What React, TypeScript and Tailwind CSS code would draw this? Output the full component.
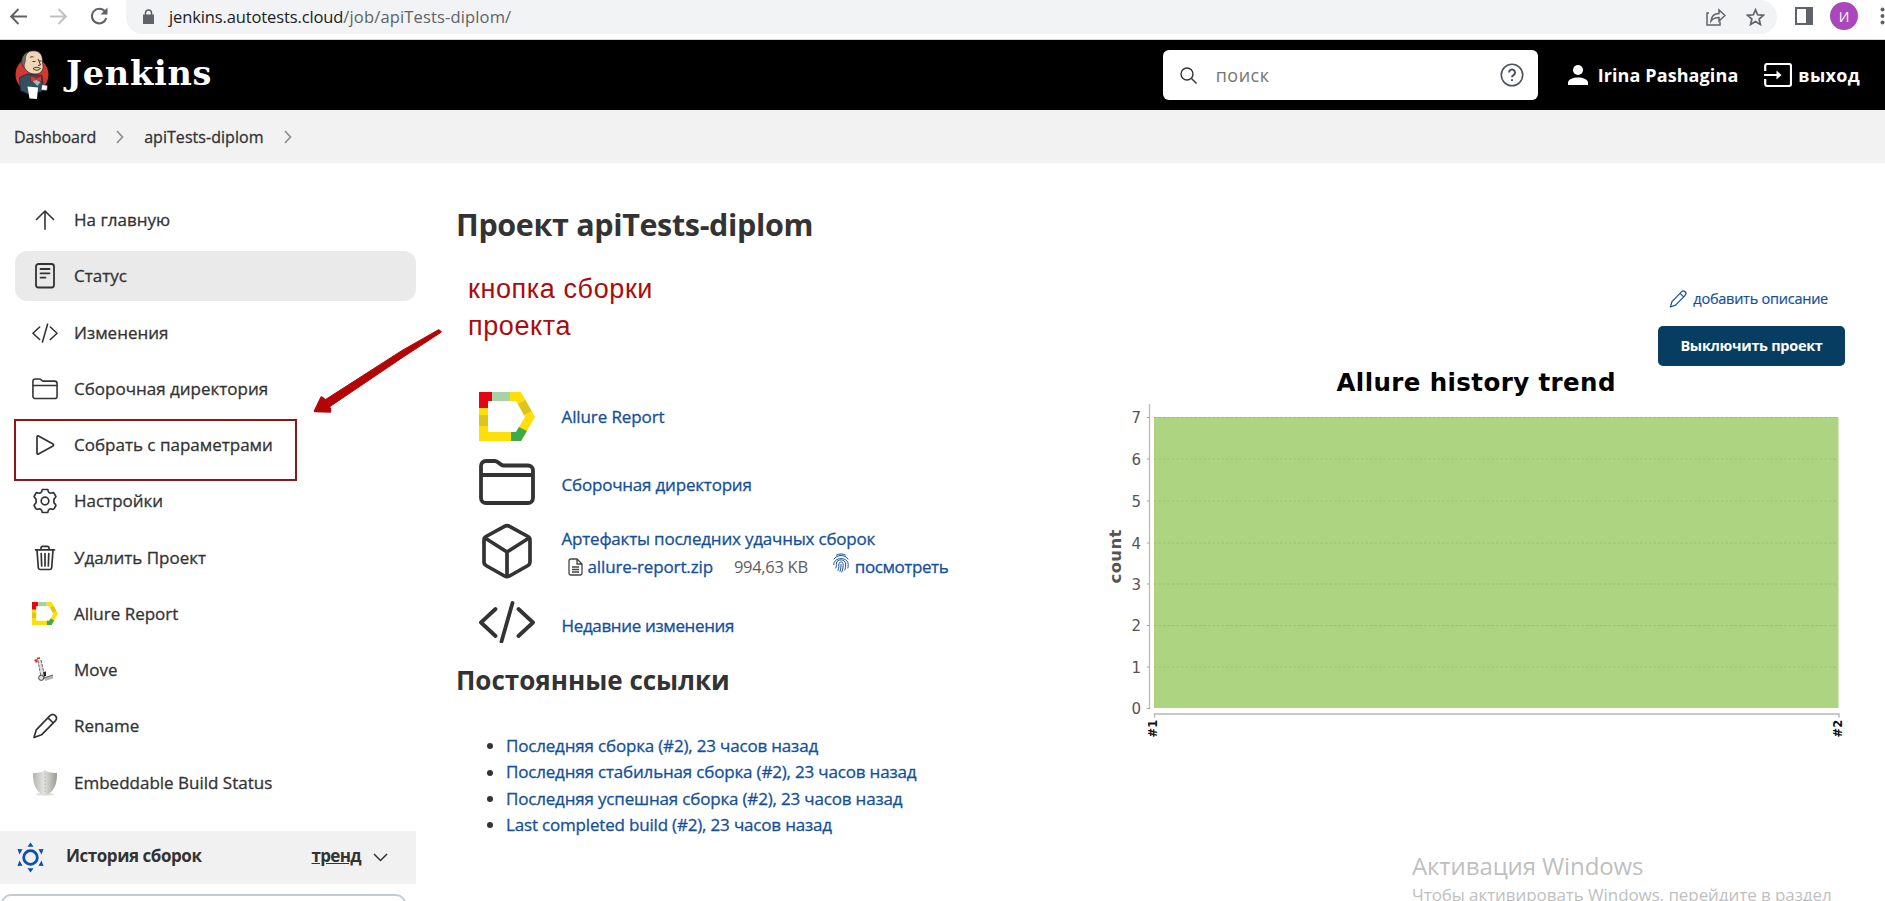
import React from "react";

const ink = "#333333";

function ArrowUp() {
  return (
    <svg width="26" height="26" viewBox="0 0 26 26" fill="none" stroke={ink} strokeWidth="1.6" strokeLinecap="round" strokeLinejoin="round">
      <path d="M13 22.2V4M4.5 12.5 13 4l8.500 8.500" />
    </svg>
  );
}
function StatusIcon() {
  return (
    <svg width="26" height="26" viewBox="0 0 26 26" fill="none" stroke={ink} strokeWidth="1.800" strokeLinecap="round">
      <rect x="4" y="1" width="18" height="23.500" rx="2.500" />
      <path d="M8.500 6h9M8.500 10.300h9M8.500 14.600h5" />
    </svg>
  );
}
function CodeIcon({ w, h, s }: { w: number; h: number; s: number }) {
  return (
    <svg width={w} height={h} viewBox="0 0 56 42" fill="none" stroke={ink} strokeWidth={s} strokeLinecap="round" strokeLinejoin="round">
      <path d="M16.500 8 2 21.500 16.500 35M39.500 8 54 21.500 39.500 35M33.500 2 22.500 40.500" />
    </svg>
  );
}
function FolderIcon({ w, h, s }: { w: number; h: number; s: number }) {
  return (
    <svg width={w} height={h} viewBox="0 0 56 46" fill="none" stroke={ink} strokeWidth={s} strokeLinejoin="round">
      <path d="M2 7a5 5 0 0 1 5-5h9c3.500 0 5 4.500 8.500 4.500h24.500a5 5 0 0 1 5 5V39a5 5 0 0 1-5 5H7a5 5 0 0 1-5-5ZM2 16h52" />
    </svg>
  );
}
function PlayIcon() {
  return (
    <svg width="26" height="26" viewBox="0 0 26 26" fill="none" stroke={ink} strokeWidth="1.700" strokeLinejoin="round">
      <path d="M5 4.800v16.400c0 .8.8 1.200 1.500.8L21 13.900c.7-.4.7-1.400 0-1.800L6.500 4c-.7-.4-1.500 0-1.500.8Z" />
    </svg>
  );
}
function GearIcon() {
  return (
    <svg width="26" height="26" viewBox="0 0 26 26" fill="none" stroke={ink} strokeWidth="1.700" strokeLinejoin="round">
      <path d="M10.200 1.500h5.600q.2 2.600 1.500 3.300t3.500-.1q1 0 1.500 1l1.600 2.800q-.1 1.200-1.700 2.300-.7 2.200 0 4.400 1.600 1 1.700 2.300l-1.600 2.800q-.5 1-1.500 1-2.200-.8-3.500-.1t-1.500 3.300h-5.600q-.2-2.600-1.500-3.300t-3.500.1q-1 0-1.500-1l-1.600-2.800q.1-1.200 1.700-2.300.7-2.200 0-4.400-1.600-1-1.700-2.300l1.600-2.800q.5-1 1.500-1 2.200.8 3.500.1t1.500-3.300Z" />
      <circle cx="13" cy="13" r="3.800" />
    </svg>
  );
}
function TrashIcon() {
  return (
    <svg width="26" height="26" viewBox="0 0 26 26" fill="none" stroke={ink} strokeWidth="1.700" strokeLinecap="round" strokeLinejoin="round">
      <path d="M3.500 4.800h19M9 4.500V3c0-1 .6-1.700 1.700-1.700h4.600C16.400 1.300 17 2 17 3v1.500M5 5l1.300 17.500c.1 1.300 1 2 2.200 2h9c1.200 0 2.100-.7 2.200-2L21 5M9.200 8.500l.5 12.500M13 8.500V21M16.800 8.500 16.300 21" />
    </svg>
  );
}
function AllureIcon({ w, h }: { w: number; h: number }) {
  return (
    <svg width={w} height={h} viewBox="0 0 56 49" preserveAspectRatio="none">
      <path fill="#ffde0a" d="M31 0h11l14 25-14 24H0V15h9v25h28l9-15-9-16h-6Z" />
      <path fill="#e30613" d="M0 0h13v9H9v7H0Z" />
      <path fill="#a5d3a5" d="M13 0h18v9H13Z" />
      <path fill="#dfc41c" d="M0 23h9v11H0ZM46.500 8l6 11-7.500 4-6-11Z" />
      <path fill="#3dab49" d="M32 40h5l3-5 8 4-6 10H32Z" />
    </svg>
  );
}
function MoveIcon() {
  return (
    <svg width="26" height="26" viewBox="0 0 26 26" fill="none">
      <path d="M7.500 3 11 18" stroke="#ddd" strokeWidth="3" />
      <path d="M6 3.500 9 20M9 3l3.500 15" stroke="#555" strokeWidth=".9" strokeDasharray="3 1" />
      <path d="M2.500 3.500l3-.8M5 1.500l3-.6M3.500 5l2-.4" stroke="#c22" strokeWidth="1.500" />
      <path d="M12 20.500 21 17.500v4l-8 2.500Z" fill="#b5b5b5" />
      <path d="M12 21 21 18" stroke="#555" strokeWidth=".8" />
      <path d="m11.500 15 2.500-.5v4.500l-2.500 1Z" fill="#222" />
      <circle cx="9.200" cy="20.800" r="2.600" fill="#ddd" stroke="#444" />
    </svg>
  );
}
function PencilIcon({ size, color, s }: { size: number; color: string; s: number }) {
  return (
    <svg width={size} height={size} viewBox="0 0 26 26" fill="none" stroke={color} strokeWidth={s} strokeLinejoin="round">
      <path d="M2 24.500 4.300 16.800 18 2.700c3.500-3.500 8.700 1.500 5.300 5.100L9.500 21.800ZM16 4.800l5.300 5.200" />
    </svg>
  );
}
function ShieldIcon() {
  return (
    <svg width="26" height="26" viewBox="0 0 26 26">
      <defs>
        <linearGradient id="shield" x1="0" x2="1">
          <stop offset="0" stopColor="#b5b5b0" />
          <stop offset=".45" stopColor="#e2e2de" />
          <stop offset="1" stopColor="#9a9a95" />
        </linearGradient>
      </defs>
      <ellipse cx="13" cy="24.300" rx="9" ry="1.500" fill="#dcdcdc" />
      <path d="M13 0c3 2.500 7 3.200 12 3 .3 9-2 17-8 20.500L13 25.500l-4-2C3 20 .7 12 1 3c5 .2 9-.5 12-3Z" fill="url(#shield)" />
      <path d="M13 3v20" stroke="#b0b0b0" strokeWidth="1" strokeDasharray="1.500 2" />
    </svg>
  );
}
function Butler() {
  return (
    <svg width="36" height="50" viewBox="0 0 36 50">
      <ellipse cx="17" cy="24.500" rx="16.500" ry="17" fill="#d33833" />
      <path d="M4.500 27.500 12 24l15 1.500 1 8-1 8-14 2.500-7.500-3.500Z" fill="#335061" stroke="#1a2a35" strokeWidth=".8" />
      <path d="M8.500 13C8 5 12 .8 18.500 .8c7.500 0 9.500 6 9 12.200 2 6-1 11-7 11-7 .5-12-5-12-11Z" fill="#f0d6b7" stroke="#222" strokeWidth=".7" />
      <path d="M8.500 17C5 12 6.500 4 14 1.500c-2 2-3.500 4-3.500 7 0 2.500-.5 4.500-2 8.500Z" fill="#6d6b6d" stroke="#222" strokeWidth=".5" />
      <path d="M15 7.500c1.500-1 2.500-1 3.500-.5M17.500 11.500h3M24 11h2.500M23 9l2.500 6-2.500.5M18 18.500c3-2 5.500-1 7.500 0-2 2-5 2.500-7.500 0Z" fill="none" stroke="#33251d" strokeWidth=".9" />
      <path d="M15.500 25.500l6 2.500 5-2.500v6.500l-5-2-6 2Z" fill="#d33833" stroke="#611" strokeWidth=".5" />
      <path d="m17.500 31 4-1 4 2-3 4Z" fill="#a9b4bb" />
      <path d="M12.500 36.500 23 37.500l-1 11.500-7.500-.5Z" fill="#fff" />
      <path d="M27 34.500 32.500 35.500l-.5 5-6-.5Z" fill="#fff" stroke="#222" strokeWidth=".6" />
    </svg>
  );
}
function BuildHistoryIcon() {
  return (
    <svg width="27" height="31" viewBox="-13.500 -15.500 27 31" fill="#0b4fb3">
      <circle r="6.800" fill="none" stroke="#0b4fb3" strokeWidth="2.800" />
      <path d="M0-15 3-10.800h-6ZM0 15 3 10.800h-6ZM13-8.500l-5 .3L11-3ZM-13-8.500l5 .3L-11-3ZM13 8.500l-5-.3L11 3ZM-13 8.500l5-.3L-11 3Z" />
    </svg>
  );
}
function Fingerprint() {
  return (
    <svg width="16" height="20" viewBox="0 0 16 20" fill="none" stroke="#144f9e" strokeWidth="1" strokeLinecap="round">
      <path d="M3.500 2C6 .6 10 .6 12.500 2M1 6c3-4.700 11-4.700 14 0M.8 11.500C.8 3.500 15.200 3.500 15.200 11.500c0 1.500 0 2.500-.3 3.500M2.800 15c1-2 .4-3 .6-5 .6-4.300 9-4.300 9.300 1 0 2.500-.2 4.500-.8 6M5 17.500c1.300-3 .6-5 .9-7 .5-2 3.900-2 4.200 0 .2 3-.2 5.500-1.200 8.500M8 11.500c.1 2.500-.2 4.500-1 7" />
    </svg>
  );
}

const menu: { icon: React.ReactNode; label: string; active?: boolean }[] = [
  { icon: <ArrowUp />, label: "На главную" },
  { icon: <StatusIcon />, label: "Статус", active: true },
  { icon: <CodeIcon w={26} h={20} s={3.4} />, label: "Изменения" },
  { icon: <FolderIcon w={26} h={21.5} s={3.4} />, label: "Сборочная директория" },
  { icon: <PlayIcon />, label: "Собрать с параметрами" },
  { icon: <GearIcon />, label: "Настройки" },
  { icon: <TrashIcon />, label: "Удалить Проект" },
  { icon: <AllureIcon w={26} h={23} />, label: "Allure Report" },
  { icon: <MoveIcon />, label: "Move" },
  { icon: <PencilIcon size={26} color={ink} s={1.7} />, label: "Rename" },
  { icon: <ShieldIcon />, label: "Embeddable Build Status" },
];

const permalinks = [
  "Последняя сборка (#2), 23 часов назад",
  "Последняя стабильная сборка (#2), 23 часов назад",
  "Последняя успешная сборка (#2), 23 часов назад",
  "Last completed build (#2), 23 часов назад",
];

function Chevron() {
  return (
    <svg width="8" height="14" viewBox="0 0 8 14" fill="none" stroke="#8a8a8a" strokeWidth="1.600">
      <path d="m1 1 5.500 6L1 13" />
    </svg>
  );
}

function TrendChart() {
  const ticks = [417.5, 459, 501, 543, 584, 625.5, 667, 708.5];
  return (
    <svg className="shrink-0" width="740" height="382" viewBox="1105 366 740 382" fontFamily="DejaVu Sans, sans-serif">
      <text x="1336.500" y="390.500" fontSize="24.500" fontWeight="700" fill="#000" textLength="279">Allure history trend</text>
      <rect x="1154" y="417" width="684.500" height="291" fill="#add581" />
      <path d="M1149.500 404v305" stroke="#bdbab6" strokeWidth="1.300" />
      {ticks.map((y, i) => (
        <g key={y}>
          <path d={`M1147 ${y}h3`} stroke="#a5a5a5" />
          {i < 7 && <path d={`M1154 ${y}H1838`} stroke="#98c06f" strokeDasharray="2.500 2" />}
          <text x="1141" y={y + 5.5} fontSize="15" textAnchor="end" fill="#555">{7 - i}</text>
        </g>
      ))}
      <path d="M1154.500 717.500V714H1839v3.500" fill="none" stroke="#b8b8b8" strokeWidth="1.400" />
      <text transform="translate(1121 583.500) rotate(-90)" fontSize="16.500" fontWeight="700" fill="#555" textLength="54">count</text>
      <text transform="translate(1157 737.500) rotate(-90)" fontSize="11.500" fontWeight="700" fill="#111">#1</text>
      <text transform="translate(1842 737.500) rotate(-90)" fontSize="11.500" fontWeight="700" fill="#111">#2</text>
    </svg>
  );
}

export default function App() {
  return (
    <div className="relative flex h-[901px] w-[1885px] flex-col overflow-hidden bg-white font-['Open_Sans','Noto_Sans',sans-serif] text-[#333333]">
      <div className="flex h-[40px] shrink-0 items-start border-b border-[#d4d6d9] bg-white">
        <div className="flex h-8 w-[126px] items-center gap-[23px] pl-[10px]">
          <svg width="17" height="17" viewBox="0 0 17 17" fill="none" stroke="#5f6368" strokeWidth="1.900"><path d="M17 8.500H1.500M8.500 1 1.200 8.500l7.300 7.500" /></svg>
          <svg width="17" height="17" viewBox="0 0 17 17" fill="none" stroke="#bdc1c6" strokeWidth="1.900"><path d="M0 8.500h15.500M8.500 1l7.300 7.500L8.500 16" /></svg>
          <svg width="18" height="18" viewBox="0 0 18 18" fill="none" stroke="#5f6368" strokeWidth="2.100"><path d="M15 4.500A7.300 7.300 0 1 0 16.300 11" /><path d="M17.500.5v7h-7Z" fill="#5f6368" stroke="none" /></svg>
        </div>
        <div className="flex h-[34px] w-[1651px] items-center rounded-r-[17px] rounded-bl-[17px] bg-[#f1f3f4] pb-px pl-[17px] pr-[12px]">
          <svg width="11" height="15" viewBox="0 0 11 15"><path d="M0 5.500h11V15H0Z" fill="#5f6368" /><path d="M2.500 6V4a3 3 0 0 1 6 0v2" fill="none" stroke="#5f6368" strokeWidth="1.500" /></svg>
          <span className="ml-[15px] text-[16.500px] leading-6 tracking-[0.150px] text-[#5f6368]"><span className="tracking-[-0.120px] text-[#202124]">jenkins.autotests.cloud</span>/job/apiTests-diplom/</span>
          <svg className="ml-auto mr-[20px]" width="20" height="18" viewBox="0 0 20 18" fill="none" stroke="#5f6368" strokeWidth="1.500"><path d="M3 5H1v12h13v-3.500" /><path d="M5 13c.5-5 3-7.500 8-7.500V2l6 5.500-6 5.500V9.500c-3.500 0-6 .8-8 3.500Z" /></svg>
          <svg width="19" height="18" viewBox="0 0 19 18" fill="none" stroke="#5f6368" strokeWidth="1.700"><path d="m9.500 1.800 2.200 5 5.600.5-4.200 3.700 1.300 5.500-4.900-2.900-4.900 2.900L5.900 11 1.700 7.300l5.600-.5Z" /></svg>
        </div>
        <div className="flex h-8 shrink-0 items-center pl-[18px]">
          <svg width="18" height="18" viewBox="0 0 18 18"><path d="M1 1h16v16H1Z" fill="none" stroke="#5f6368" strokeWidth="2" /><path d="M11 1h6v16h-6Z" fill="#5f6368" /></svg>
          <div className="ml-[17px] flex size-7 items-center justify-center rounded-full bg-[#ab47bc] text-[14px] text-white">И</div>
          <svg className="ml-[22px]" width="5" height="18" viewBox="0 0 5 18" fill="#5f6368"><circle cx="2.500" cy="2.500" r="2" /><circle cx="2.500" cy="9" r="2" /><circle cx="2.500" cy="15.500" r="2" /></svg>
        </div>
      </div>

      <header className="flex h-[70px] shrink-0 items-center bg-black text-white">
        <div className="ml-[15px] flex items-center gap-[15px]">
          <Butler />
          <span className="pb-[2px] font-['DejaVu_Serif',serif] text-[33.500px] font-bold leading-none tracking-[0.800px]">Jenkins</span>
        </div>
        <div className="ml-auto flex h-[50px] w-[375px] items-center rounded-md bg-white pl-[17px] pr-[14px]">
          <svg width="17" height="17" viewBox="0 0 17 17" fill="none" stroke="#333" strokeWidth="1.400"><circle cx="7" cy="7" r="6" /><path d="m11.500 11.500 5 5" /></svg>
          <span className="ml-[19px] text-[18px] tracking-[0.500px] text-[#757575]">поиск</span>
          <svg className="ml-auto" width="24" height="24" viewBox="0 0 24 24" fill="none" stroke="#4d545d" strokeWidth="1.600"><circle cx="12" cy="12" r="10.700" /><path d="M9 9.500a3 3 0 1 1 4.500 2.600c-1 .6-1.500 1.100-1.500 2.200M12 16.200v1.800" strokeWidth="2" /></svg>
        </div>
        <div className="ml-[30px] flex items-center">
          <svg width="20" height="20" viewBox="0 0 20 20" fill="#fff"><circle cx="10" cy="5" r="5" /><path d="M0 20v-2.500c0-3 5-5 10-5s10 2 10 5V20Z" /></svg>
          <span className="ml-[10px] pt-px text-[18px] font-bold tracking-[0.100px]">Irina Pashagina</span>
        </div>
        <div className="ml-[26px] mr-[25px] flex items-center">
          <svg width="28" height="24" viewBox="0 0 28 24" fill="none" stroke="#fff" strokeWidth="2.200"><path d="M1.200 8V3a2 2 0 0 1 2-2H25a2 2 0 0 1 2 2v18a2 2 0 0 1-2 2H3.200a2 2 0 0 1-2-2v-5M0 12h15" /><path d="m12.500 7.500 5 4.500-5 4.500Z" fill="#fff" stroke="none" /></svg>
          <span className="ml-[6px] pt-px text-[18px] font-bold tracking-[0.300px]">выход</span>
        </div>
      </header>

      <nav className="flex h-[53px] shrink-0 items-center bg-[#f2f2f2] pl-[14px] text-[16px] font-medium [-webkit-text-stroke:0.3px]">
        <span className="tracking-[-0.050px]">Dashboard</span>
        <span className="ml-[20px]"><Chevron /></span>
        <span className="ml-[20px] tracking-[0.050px]">apiTests-diplom</span>
        <span className="ml-[20px]"><Chevron /></span>
      </nav>

      <div className="flex min-h-0 flex-1">
        <aside className="w-[416px] shrink-0 pt-[32px]">
          <ul className="flex flex-col gap-[6.250px] pl-[15px]">
            {menu.map((m) => (
              <li key={m.label} className={m.active ? "flex h-[50px] items-center rounded-xl bg-[#eaeaea] pl-[17px]" : "flex h-[50px] items-center pl-[17px]"}>
                <span className="flex w-[26px] justify-center">{m.icon}</span>
                <span className="ml-[16px] text-[17px] font-medium leading-6 [-webkit-text-stroke:0.3px]">{m.label}</span>
              </li>
            ))}
          </ul>
          <div className="mt-[23px] flex h-[53px] items-center bg-[#f1f1f1] pl-[17px] pr-[28px] font-bold">
            <BuildHistoryIcon />
            <span className="ml-[22px] pb-[2px] text-[17px] tracking-[-0.450px]">История сборок</span>
            <span className="ml-auto pb-[2px] text-[17px] tracking-[-0.650px] underline">тренд</span>
            <svg className="ml-[12px]" width="15" height="9" viewBox="0 0 15 9" fill="none" stroke="#333" strokeWidth="1.500"><path d="m1 1 6.500 6.500L14 1" /></svg>
          </div>
          <div className="ml-px mt-[10px] h-12 w-[405px] rounded-[10px] border-2 border-[#c3ccd1]" />
        </aside>

        <main className="ml-[40px] w-[640px] shrink-0">
          <h1 className="mt-[39px] text-[30.500px] font-bold leading-[44px] tracking-[-0.350px]">Проект apiTests-diplom</h1>
          <p className="ml-[12px] mt-[25px] font-['Liberation_Sans',sans-serif] text-[27px] leading-[37px] tracking-[0.600px] text-[#ad0b0b]">кнопка сборки<br />проекта</p>
          <div className="ml-[23px] mt-[38px] text-[17px] font-medium leading-6 tracking-[-0.200px] text-[#144f9e] [-webkit-text-stroke:0.3px]">
            <div className="flex h-[66px] items-center"><AllureIcon w={56} h={49} /><span className="ml-[26.500px] mt-[2px] tracking-[-0.100px]">Allure Report</span></div>
            <div className="flex h-[66px] items-center"><FolderIcon w={56} h={46} s={3.8} /><span className="ml-[26.500px] mt-[6px]">Сборочная директория</span></div>
            <div className="flex h-[72px] items-center">
              <svg width="56" height="56" viewBox="0 0 56 56" fill="none" stroke={ink} strokeWidth="3.700" strokeLinejoin="round"><path d="M25.500 3.300a5 5 0 0 1 5 0L49 13.500a4 4 0 0 1 2 3.500v22a4 4 0 0 1-2 3.500L30.500 53a5 5 0 0 1-5 0L7 42.500A4 4 0 0 1 5 39V17a4 4 0 0 1 2-3.500ZM6 15l22 14 22-14M28 29v24" /></svg>
              <div className="ml-[26.500px] mt-[5px]">
                <div>Артефакты последних удачных сборок</div>
                <div className="mt-[3px] flex h-[26px] items-center pl-[6px]">
                  <svg width="15" height="18" viewBox="0 0 15 18" fill="none" stroke="#444" strokeWidth="1.300"><path d="M9 1H3a2 2 0 0 0-2 2v12a2 2 0 0 0 2 2h9a2 2 0 0 0 2-2V6Zm0 0v5h5M4 9h7M4 11.500h7M4 14h7" /></svg>
                  <span className="ml-[5px] tracking-[-0.130px]">allure-report.zip</span>
                  <span className="ml-[21px] text-[16.500px] font-normal tracking-[-0.300px] text-[#5c6066] [-webkit-text-stroke:0px]">994,63 KB</span>
                  <span className="mb-2 ml-[25px]"><Fingerprint /></span>
                  <span className="ml-[6px] tracking-[-0.400px]">посмотреть</span>
                </div>
              </div>
            </div>
            <div className="flex h-[70px] items-center"><CodeIcon w={56} h={42} s={3.8} /><span className="ml-[26.500px] mt-[7px] tracking-[-0.350px]">Недавние изменения</span></div>
          </div>
          <h2 className="mt-[5px] text-[26px] font-bold leading-[36px]">Постоянные ссылки</h2>
          <ul className="mt-[35px] text-[17px] font-medium leading-[26.400px] tracking-[-0.180px] text-[#144f9e] [-webkit-text-stroke:0.3px]">
            {permalinks.map((p) => (
              <li key={p} className="flex items-center pl-[31px]"><span className="mr-[13px] size-[6px] rounded-full bg-[#333]" />{p}</li>
            ))}
          </ul>
        </main>

        <section className="flex flex-1 flex-col items-end pr-[40px] pt-[124px]">
          <div className="mr-[17px] flex items-center gap-[6px] text-[#144f9e]">
            <PencilIcon size={18} color="#144f9e" s={1.8} />
            <span className="text-[14.500px] font-medium leading-6 tracking-[-0.250px] [-webkit-text-stroke:0.2px]">добавить описание</span>
          </div>
          <button className="mt-[14.500px] h-[40px] w-[187px] shrink-0 rounded-[5px] bg-[#063d60] text-[14.500px] font-bold tracking-[-0.300px] text-white">Выключить проект</button>
          <TrendChart />
          <div className="mr-px mt-[103.500px] w-[432px] shrink-0 whitespace-nowrap text-[#bfbfbf]">
            <div className="text-[24px] leading-[30px] tracking-[-0.100px]">Активация Windows</div>
            <div className="mt-[2px] text-[17px] leading-6 tracking-[-0.080px]">Чтобы активировать Windows, перейдите в раздел</div>
          </div>
        </section>
      </div>

      <div className="absolute left-[14px] top-[419px] h-[62px] w-[283px] border-2 border-[#8f1616]" />
      <svg className="absolute left-[312px] top-[326px]" width="132" height="88" viewBox="0 0 132 88">
        <path d="M127 3.500 90 24.500 12 74.500 16.500 81.500 92 30.500 129.500 6Z" fill="#b30505" stroke="#b30505" strokeWidth="1" strokeLinejoin="round" />
        <path d="M9.500 71.500 3 85l15 .5v-2.500l-6-9.500Z" fill="#b30505" stroke="#b30505" strokeWidth="2.500" strokeLinejoin="round" />
      </svg>
    </div>
  );
}
